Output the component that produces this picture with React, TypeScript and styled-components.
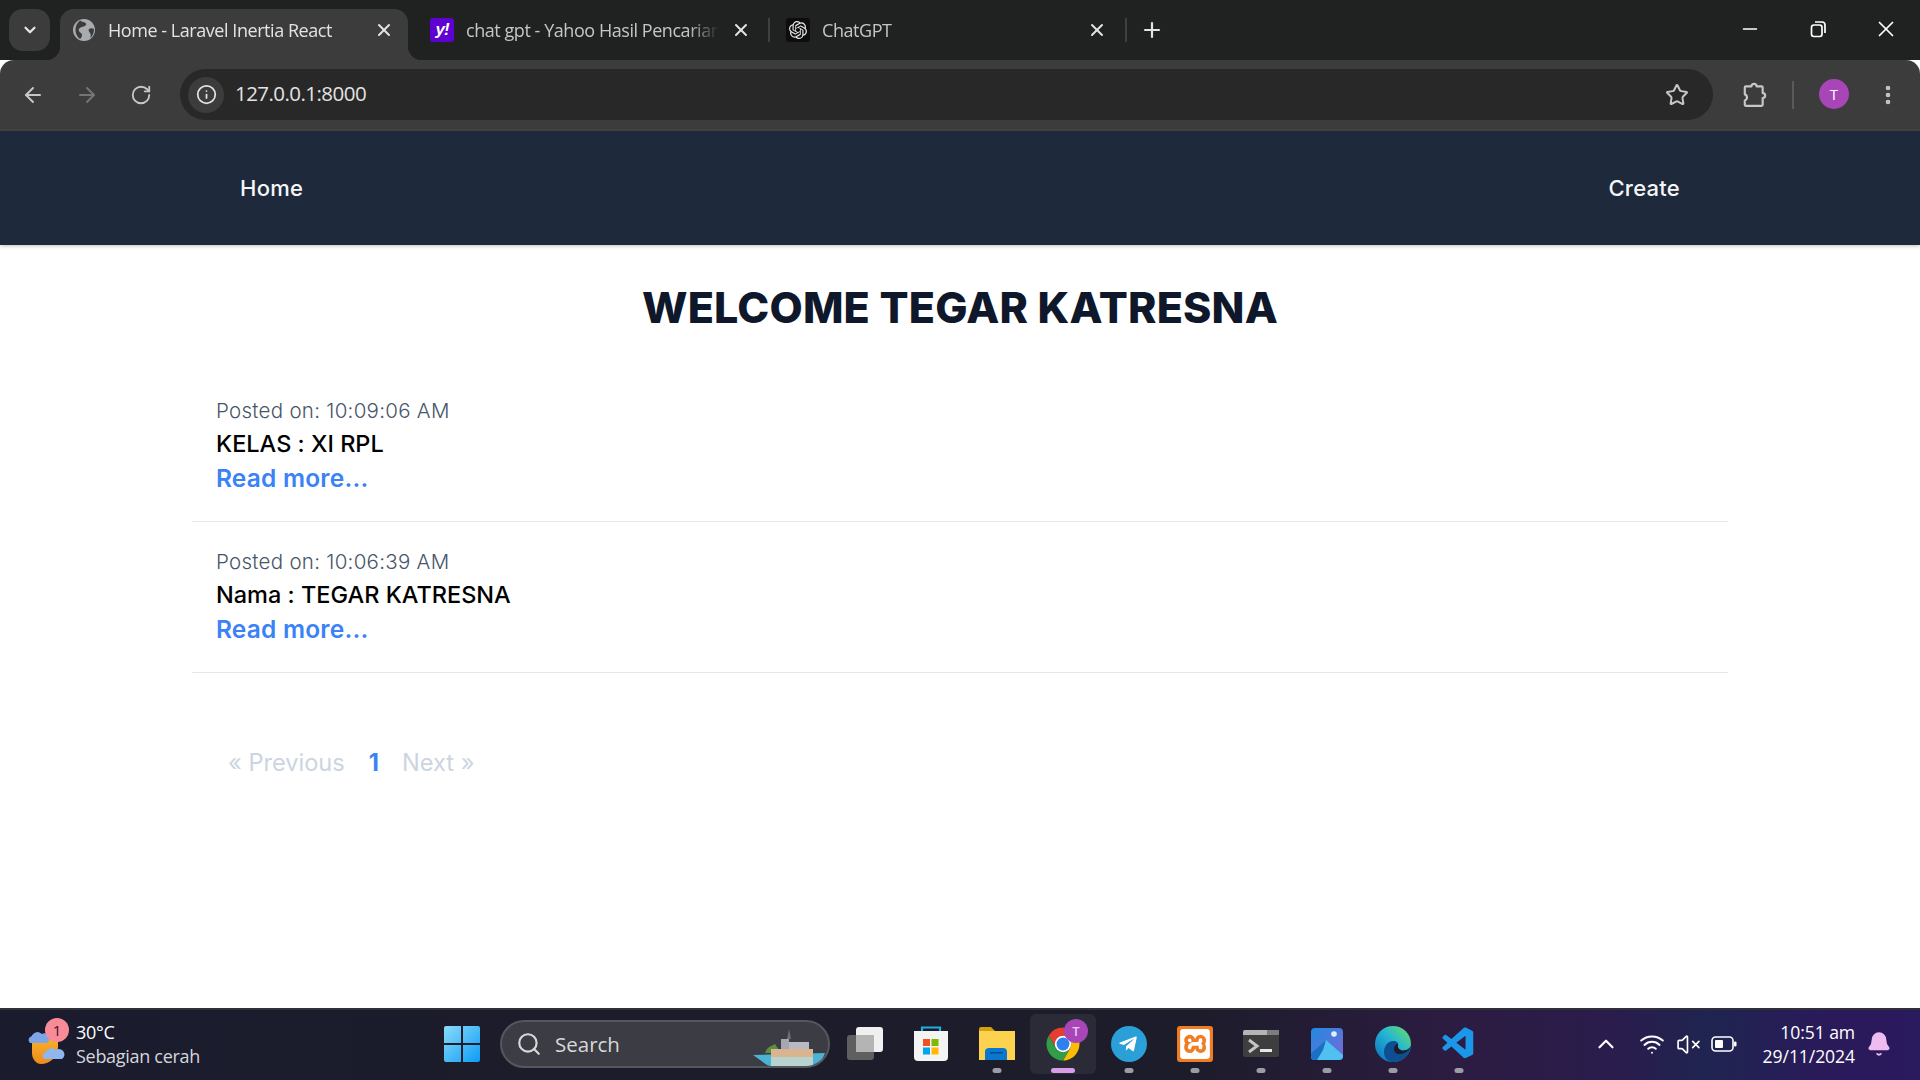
import type { ReactNode } from "react"
import styled, { createGlobalStyle } from "styled-components"
import { ArrowLeft, ArrowRight, RotateCw, Info, Star, EllipsisVertical, ChevronDown, ChevronUp, X, Plus, Minus, Search, Wifi, VolumeX, Bell } from "lucide-react"
import { SiOpenai, SiXampp } from "react-icons/si"
import { VscVscode } from "react-icons/vsc"
import { FaTelegramPlane } from "react-icons/fa"

const GlobalStyle = createGlobalStyle`
    html, body {
        margin: 0;
        padding: 0;
        height: 100%;
        background: white;
    }
    #root {
        height: 100%;
    }
    * {
        box-sizing: border-box;
    }
`

const Screen = styled.div`
    width: 1920px;
    height: 1080px;
    display: flex;
    flex-direction: column;
    overflow: hidden;
    font-family: Inter, sans-serif;
`

/* browser chrome */
const TabStrip = styled.div`
    height: 60px;
    flex: none;
    background: #202221;
    display: flex;
    align-items: flex-end;
    position: relative;
`

const TabSearchButton = styled.div`
    width: 41px;
    height: 42px;
    margin: 0 10px 9px 9px;
    border-radius: 14px;
    background: #3c3c3c;
    color: #e6e6e6;
    display: flex;
    align-items: center;
    justify-content: center;
`

const Tab = styled.div<{ $active?: boolean; $width: number; $left: number; $right: number }>`
    width: ${p => p.$width}px;
    height: 51px;
    flex: none;
    display: flex;
    align-items: center;
    padding: 0 ${p => p.$right}px 9px ${p => p.$left}px;
    gap: 12px;
    position: relative;
    border-radius: 14px 14px 0 0;
    background: ${p => (p.$active ? "#3c3c3c" : "transparent")};
    color: ${p => (p.$active ? "#e3e3e3" : "#c4c7c5")};
    font-family: "Open Sans", sans-serif;
    font-size: 18px;
    letter-spacing: -0.45px;

    ${p => p.$active && `
        &::before, &::after {
            content: "";
            position: absolute;
            bottom: 0;
            width: 14px;
            height: 14px;
        }
        &::before {
            left: -14px;
            background: radial-gradient(circle at 0 0, transparent 14px, #3c3c3c 14.5px);
        }
        &::after {
            right: -14px;
            background: radial-gradient(circle at 100% 0, transparent 14px, #3c3c3c 14.5px);
        }
    `}
`

const TabTitle = styled.span`
    flex: 1;
    white-space: nowrap;
    overflow: hidden;
    -webkit-mask-image: linear-gradient(to right, black 88%, transparent);
    mask-image: linear-gradient(to right, black 88%, transparent);
`

const TabIcon = styled.span<{ $bg?: string }>`
    width: 24px;
    height: 24px;
    flex: none;
    border-radius: 3px;
    display: flex;
    align-items: center;
    justify-content: center;
    background: ${p => p.$bg || "transparent"};
`

const YahooMark = styled.span`
    color: white;
    font-family: "Liberation Sans", sans-serif;
    font-weight: 700;
    font-size: 17px;
    letter-spacing: -1px;
    font-style: italic;
`

const TabClose = styled.span`
    flex: none;
    color: #e3e3e3;
    display: flex;
`

const TabDivider = styled.span`
    width: 2px;
    height: 24px;
    margin-bottom: 18px;
    flex: none;
    background: #3f4140;
`

const NewTab = styled.span`
    margin: 0 0 18px 13px;
    color: #e3e3e3;
    display: flex;
`

const WindowButtons = styled.div`
    margin-left: auto;
    margin-bottom: 18px;
    display: flex;
    align-items: center;
    color: white;
`

const WindowButton = styled.span`
    width: 68px;
    display: flex;
    justify-content: center;
`

const Toolbar = styled.div`
    height: 71px;
    flex: none;
    background: #3c3c3c;
    border-radius: 14px 14px 0 0;
    border-bottom: 2px solid #444;
    display: flex;
    align-items: flex-start;
    padding: 9px 0 0 6px;
`

const NavIcon = styled.span<{ $dim?: boolean; $width?: number }>`
    width: ${p => p.$width || 54}px;
    height: 51px;
    flex: none;
    display: flex;
    align-items: center;
    justify-content: center;
    color: ${p => (p.$dim ? "#757575" : "#c7c7c7")};
`

const AddressBar = styled.div`
    width: 1533px;
    height: 51px;
    margin: 0 14px 0 12px;
    flex: none;
    border-radius: 26px;
    background: #282828;
    display: flex;
    align-items: center;
    padding: 0 24px 0 8px;
    color: #e3e3e3;
    font-family: "Open Sans", sans-serif;
    font-size: 20.5px;
    letter-spacing: -0.55px;
    line-height: 49px;
`

const SiteInfo = styled.span`
    width: 36px;
    height: 36px;
    margin-right: 11px;
    border-radius: 50%;
    background: #3c3c3c;
    color: #e3e3e3;
    display: flex;
    align-items: center;
    justify-content: center;
`

const AddressText = styled.span`
    margin-top: -2px;
`

const BookmarkStar = styled.span`
    margin-left: auto;
    color: #c7c7c7;
    display: flex;
`

const ToolDivider = styled.span`
    width: 2px;
    height: 28px;
    margin: 12px 25px 0 11px;
    flex: none;
    background: #5a5a5a;
`

const ProfileDot = styled.span`
    width: 30px;
    height: 30px;
    margin: 10px 27px 0 0;
    flex: none;
    border-radius: 50%;
    background: #a846b8;
    color: white;
    font-family: "Open Sans", sans-serif;
    font-size: 15px;
    display: flex;
    align-items: center;
    justify-content: center;
`

/* page */
const TopNav = styled.nav`
    height: 114px;
    flex: none;
    background: #1e293b;
    box-shadow: 0 1px 4px rgba(0, 0, 0, 0.25);
    display: flex;
    align-items: center;
    justify-content: space-between;
    padding: 0 240px;
    color: #f5f6f8;
    font-size: 22px;
    font-weight: 500;
    letter-spacing: 0.25px;
`

const Main = styled.main`
    flex: 1;
    width: 1536px;
    margin: 0 auto;
`

const Title = styled.h1`
    margin: 37px 0 0;
    text-align: center;
    font-size: 43px;
    line-height: 50px;
    font-weight: 800;
    letter-spacing: 0.15px;
    color: #0f172a;
`

const PostList = styled.div`
    margin-top: 39px;
`

const Post = styled.article`
    height: 151px;
    padding: 23px 24px 0;
    border-bottom: 1px solid #e5e7eb;
`

const PostedOn = styled.div`
    height: 33px;
    line-height: 33px;
    font-size: 20.5px;
    font-weight: 300;
    letter-spacing: 0.28px;
    color: #475569;
`

const PostTitle = styled.div`
    height: 33px;
    line-height: 33px;
    font-size: 23.5px;
    font-weight: 500;
    font-feature-settings: "calt" 0;
    color: #000;
`

const ReadMore = styled.a`
    display: block;
    height: 36px;
    line-height: 36px;
    font-size: 24.5px;
    font-weight: 600;
    letter-spacing: 0.2px;
    color: #3b82f6;
`

const Pagination = styled.div`
    margin: 72px 0 0 36px;
    display: flex;
    align-items: center;
    font-size: 23.6px;
    line-height: 36px;
    color: #cbd5e1;
`

const PageCurrent = styled.span`
    margin: 0 23px 0 24px;
    color: #3b82f6;
    font-weight: 700;
`

/* taskbar */
const Taskbar = styled.footer`
    height: 72px;
    flex: none;
    border-top: 2px solid #2f3038;
    padding-bottom: 2px;
    background: linear-gradient(90deg, #1a1c2e 0%, #1c1c2a 30%, #1d1c2a 62%, #2c1c42 76%, #2a1c4c 84%, #1f2450 89%, #2a1a5a 95%, #2a1a5e 100%);
    display: flex;
    align-items: center;
    color: white;
    font-family: "Open Sans", sans-serif;
    position: relative;
`

const Weather = styled.div`
    width: 429px;
    flex: none;
    display: flex;
    align-items: center;
    padding-left: 28px;
    gap: 10px;
`

const WeatherIcon = styled.div`
    width: 38px;
    height: 42px;
    position: relative;
    flex: none;
`

const WeatherBadge = styled.span`
    position: absolute;
    top: -5px;
    left: 17px;
    width: 24px;
    height: 24px;
    border-radius: 50%;
    background: #f98b99;
    color: #30151c;
    font-size: 15px;
    display: flex;
    align-items: center;
    justify-content: center;
`

const WeatherText = styled.div`
    font-size: 18px;
    line-height: 24px;
    letter-spacing: -0.3px;
    color: #fff;
`

const WeatherSub = styled.div`
    color: #d6d6da;
`

const TaskSlot = styled.div<{ $active?: boolean }>`
    width: 66px;
    height: 60px;
    flex: none;
    border-radius: 6px;
    display: flex;
    align-items: center;
    justify-content: center;
    position: relative;
    background: ${p => (p.$active ? "#2a2b36" : "transparent")};
`

const RunDot = styled.span<{ $active?: boolean }>`
    position: absolute;
    bottom: 1px;
    left: 50%;
    transform: translateX(-50%);
    width: ${p => (p.$active ? 24 : 9)}px;
    height: 5px;
    border-radius: 3px;
    background: ${p => (p.$active ? "#d99ce8" : "#9c9ca4")};
`

const ChromeBadge = styled.span`
    position: absolute;
    top: 5px;
    right: 8px;
    width: 24px;
    height: 24px;
    border-radius: 50%;
    background: #a846b8;
    color: #e8c6ee;
    font-size: 13px;
    font-weight: 600;
    display: flex;
    align-items: center;
    justify-content: center;
`

const SearchPill = styled.div`
    width: 330px;
    height: 48px;
    margin: 0 2px 0 5px;
    flex: none;
    border-radius: 24px;
    background: #3b3c44;
    border: 2px solid #55565e;
    display: flex;
    align-items: center;
    padding-left: 14px;
    gap: 13px;
    font-size: 20.5px;
    color: #d8d8da;
    position: relative;
    overflow: hidden;
`

const SearchArt = styled.div`
    position: absolute;
    right: 3px;
    bottom: -1px;
    display: flex;
`

const Tray = styled.div`
    margin-left: auto;
    display: flex;
    align-items: center;
    height: 100%;
`

const TrayIcon = styled.span<{ $width: number; $gap?: number }>`
    width: ${p => p.$width}px;
    margin-right: ${p => p.$gap || 0}px;
    flex: none;
    display: flex;
    justify-content: center;
    color: white;
`

const Clock = styled.div`
    width: 105px;
    margin-left: 8px;
    text-align: right;
    font-size: 17.6px;
    line-height: 24px;
    letter-spacing: -0.1px;
    white-space: nowrap;
`

const BellSlot = styled.span`
    width: 47px;
    margin-right: 18px;
    flex: none;
    display: flex;
    justify-content: center;
    color: #eebcf0;
`

const Globe = () => (
    <svg width="24" height="24" viewBox="0 0 24 24">
        <circle cx="12" cy="12" r="11" fill="#a9acae" />
        <path d="M8 2.5c2 2 5 1 6 3s-2 3-4 3.5-4 2-3 4 3 2 3 4-1 3-2 4C3 18 1 8 8 2.5zM22 11c-2-1-4-1-5 0s0 3 1 4 1 3 0 5c3-2 4-6 4-9z" fill="#3c3c3c" />
    </svg>
)

const RestoreGlyph = () => (
    <svg width="18" height="18" viewBox="0 0 18 18" fill="none" stroke="white" strokeWidth="1.7">
        <rect x="2.5" y="5" width="10.5" height="11.5" rx="2.4" />
        <path d="M6 2h7a3 3 0 0 1 3 3v8" />
    </svg>
)

const ExtensionGlyph = () => (
    <svg width="26" height="26" viewBox="0 0 24 24" fill="none" stroke="#c7c7c7" strokeWidth="2">
        <path d="M4.5 4h5.2a2.3 2.3 0 0 1 4.6 0H19a1 1 0 0 1 1 1v5.2a2.3 2.3 0 0 1 0 4.6V21a1 1 0 0 1-1 1H4.5a1 1 0 0 1-1-1v-4a2.9 2.9 0 0 0 2-2.8 2.9 2.9 0 0 0-2-2.8V5a1 1 0 0 1 1-1z" strokeLinejoin="round" />
    </svg>
)

const BatteryGlyph = () => (
    <svg width="26" height="18" viewBox="0 0 26 18">
        <rect x="1" y="2" width="21" height="14" rx="3.5" fill="none" stroke="white" strokeWidth="1.6" />
        <rect x="4" y="5" width="8" height="8" rx="1" fill="white" />
        <rect x="23" y="6.5" width="2.5" height="5" rx="1" fill="white" />
    </svg>
)

const ChromeLogo = () => (
    <svg width="36" height="36" viewBox="0 0 48 48">
        <path d="M24 2A22 22 0 0 1 43.05 13H24A11 11 0 0 0 14.5 29.5L4.95 13A22 22 0 0 1 24 2Z" fill="#e53d30" />
        <path d="M43.05 13A22 22 0 0 1 24 46L33.5 29.5A11 11 0 0 0 24 13Z" fill="#fbbc04" />
        <path d="M4.95 13L14.5 29.5A11 11 0 0 0 33.5 29.5L24 46A22 22 0 0 1 4.95 13Z" fill="#2f9e46" />
        <circle cx="24" cy="24" r="11" fill="white" />
        <circle cx="24" cy="24" r="8.6" fill="#2f7fec" />
    </svg>
)

const WindowsLogo = () => (
    <svg width="36" height="36" viewBox="0 0 36 36">
        <defs>
            <linearGradient id="win" x1="0" y1="0" x2="1" y2="1">
                <stop offset="0" stopColor="#8adcfb" />
                <stop offset="1" stopColor="#0d9bf4" />
            </linearGradient>
        </defs>
        <path d="M2 0h15v17H0V2a2 2 0 0 1 2-2zM19 0h15a2 2 0 0 1 2 2v15H19zM0 19h17v17H2a2 2 0 0 1-2-2zM19 19h17v15a2 2 0 0 1-2 2H19z" fill="url(#win)" />
    </svg>
)

const TaskView = () => (
    <svg width="38" height="36" viewBox="0 0 38 36">
        <rect x="1" y="9" width="27" height="25" rx="3" fill="#5f5f5f" />
        <rect x="10" y="1" width="27" height="25" rx="3" fill="#f0f0f0" />
        <rect x="10" y="9" width="18" height="17" fill="#b4b4b4" />
    </svg>
)

const StoreLogo = () => (
    <svg width="36" height="36" viewBox="0 0 36 36">
        <path d="M9 6V1.5h18V6" fill="none" stroke="#1aaee8" strokeWidth="2.2" />
        <path d="M1 5h34v26a4 4 0 0 1-4 4H5a4 4 0 0 1-4-4z" fill="#f4f4f4" />
        <rect x="10" y="13" width="7" height="7" fill="#f25022" />
        <rect x="18.5" y="13" width="7" height="7" fill="#7fba00" />
        <rect x="10" y="21.5" width="7" height="7" fill="#00a4ef" />
        <rect x="18.5" y="21.5" width="7" height="7" fill="#ffb900" />
    </svg>
)

const FolderLogo = () => (
    <svg width="36" height="34" viewBox="0 0 36 34">
        <path d="M0 2a2 2 0 0 1 2-2h10l4 4h18a2 2 0 0 1 2 2v6H0z" fill="#d79f0d" />
        <rect y="4" width="36" height="29" fill="#fdd24f" />
        <path d="M6 33v-8a4 4 0 0 1 4-4h14a4 4 0 0 1 4 4v8z" fill="#0a78cf" />
        <rect x="11" y="25" width="13" height="1.6" fill="#054f95" />
    </svg>
)

const TelegramLogo = () => (
    <svg width="36" height="36" viewBox="0 0 36 36">
        <circle cx="18" cy="18" r="18" fill="#2a9fd8" />
        <foreignObject x="7" y="8" width="22" height="22">
            <FaTelegramPlane size={20} color="white" />
        </foreignObject>
    </svg>
)

const XamppLogo = () => (
    <svg width="36" height="36" viewBox="0 0 36 36">
        <rect width="36" height="36" rx="3" fill="#f07d23" />
        <foreignObject x="3" y="3" width="30" height="30">
            <SiXampp size={30} color="white" />
        </foreignObject>
    </svg>
)

const TerminalLogo = () => (
    <svg width="36" height="28" viewBox="0 0 36 28">
        <rect width="36" height="27" rx="2" fill="#3e3e3e" />
        <path d="M2 0h22v5H0V2a2 2 0 0 1 2-2z" fill="#b5b5b5" />
        <rect x="24" width="12" height="5" fill="#7d7d7d" />
        <path d="M6 10l8 6-8 6" fill="none" stroke="#c4c4c4" strokeWidth="3" />
        <rect x="17" y="19" width="12" height="3" fill="#e6e6e6" />
    </svg>
)

const PhotosLogo = () => (
    <svg width="32" height="32" viewBox="0 0 32 32">
        <defs>
            <linearGradient id="photos" x1="0" y1="0" x2="1" y2="1">
                <stop offset="0" stopColor="#1f8adf" />
                <stop offset="1" stopColor="#7a68d8" />
            </linearGradient>
        </defs>
        <rect width="32" height="32" rx="4" fill="url(#photos)" />
        <circle cx="23" cy="6" r="2.8" fill="#e4eefb" />
        <path d="M0 25l15-13 17 15v1a4 4 0 0 1-4 4H4a4 4 0 0 1-4-4z" fill="#4fc0ef" />
        <path d="M0 25l15-13-3 10-6 10H4a4 4 0 0 1-4-4z" fill="#1b6fc4" />
    </svg>
)

const EdgeLogo = () => (
    <svg width="36" height="36" viewBox="0 0 36 36">
        <defs>
            <linearGradient id="edgeA" x1="0" y1="1" x2="1" y2="0">
                <stop offset="0" stopColor="#0a6dc2" />
                <stop offset="0.55" stopColor="#25b7d3" />
                <stop offset="1" stopColor="#6fe05c" />
            </linearGradient>
        </defs>
        <circle cx="18" cy="18" r="18" fill="url(#edgeA)" />
        <path d="M36 20c-1 9-8 16-18 16-5 0-9-4-9-10 0-6 4-11 9-11 4 0 6 2 5 5-1 3-1 5 3 5 4 0 7-1 10-5z" fill="#0d4f92" />
        <path d="M23 21c1 3 4 4 8 3 2 0 4-2 5-4-1 4-6 8-11 8-4 0-6-2-6-5 0-3 2-5 4-5z" fill="#1c1c2a" />
    </svg>
)

const WeatherArt = () => (
    <svg width="38" height="42" viewBox="0 0 38 42">
        <defs>
            <linearGradient id="sun" x1="0" y1="0" x2="0" y2="1">
                <stop offset="0" stopColor="#f8b62c" />
                <stop offset="1" stopColor="#ee8a1c" />
            </linearGradient>
        </defs>
        <path d="M4 12h26v12a17 17 0 0 1-17 17C8 41 4 36 4 30z" fill="url(#sun)" />
        <path d="M2 20a4 4 0 0 1 2-7 6 6 0 0 1 10-2 5 5 0 0 1 5 9z" fill="#7ca6e8" />
        <path d="M16 36a4 4 0 0 1 2-7 6 6 0 0 1 10-2 5 5 0 0 1 6 9z" fill="#8fb6ee" />
    </svg>
)

const IslandArt = () => (
    <svg width="72" height="38" viewBox="0 0 72 38">
        <path d="M0 26l14 10 6 2h46l6-14z" fill="#4bb3d3" />
        <path d="M12 24c2-6 6-7 10-9l6 9z" fill="#5c8f3c" />
        <rect x="18" y="20" width="42" height="8" fill="#d9b491" />
        <rect x="28" y="10" width="8" height="10" fill="#a7a7b4" />
        <rect x="36" y="13" width="20" height="7" fill="#b9b9c4" />
        <path d="M36 0l2 10h-4z" fill="#6d6f7d" />
        <rect x="18" y="28" width="42" height="10" fill="#b9d4cf" />
    </svg>
)

type TaskItem = {
    name: string
    icon: ReactNode
    running?: boolean
    active?: boolean
}

const taskItems: TaskItem[] = [
    { name: "taskview", icon: <TaskView /> },
    { name: "store", icon: <StoreLogo /> },
    { name: "explorer", icon: <FolderLogo />, running: true },
    { name: "chrome", icon: <ChromeLogo />, running: true, active: true },
    { name: "telegram", icon: <TelegramLogo />, running: true },
    { name: "xampp", icon: <XamppLogo />, running: true },
    { name: "terminal", icon: <TerminalLogo />, running: true },
    { name: "photos", icon: <PhotosLogo />, running: true },
    { name: "edge", icon: <EdgeLogo />, running: true },
    { name: "vscode", icon: <VscVscode size={38} color="#1a97e8" />, running: true },
]

const posts = [
    { time: "10:09:06 AM", title: "KELAS : XI RPL" },
    { time: "10:06:39 AM", title: "Nama : TEGAR KATRESNA" },
]

const App = () => {
    return <Screen>
        <GlobalStyle />
        <TabStrip>
            <TabSearchButton><ChevronDown size={18} strokeWidth={3} /></TabSearchButton>
            <Tab $active $width={348} $left={12} $right={14}>
                <TabIcon><Globe /></TabIcon>
                <TabTitle>Home - Laravel Inertia React</TabTitle>
                <TabClose><X size={20} strokeWidth={2.4} /></TabClose>
            </Tab>
            <Tab $width={360} $left={22} $right={17}>
                <TabIcon $bg="#5f01d1"><YahooMark>y!</YahooMark></TabIcon>
                <TabTitle>chat gpt - Yahoo Hasil Pencarian</TabTitle>
                <TabClose><X size={20} strokeWidth={2.4} /></TabClose>
            </Tab>
            <TabDivider />
            <Tab $width={355} $left={16} $right={18}>
                <TabIcon $bg="#0d0d0d"><SiOpenai size={18} color="#e8e8e8" /></TabIcon>
                <TabTitle>ChatGPT</TabTitle>
                <TabClose><X size={20} strokeWidth={2.4} /></TabClose>
            </Tab>
            <TabDivider />
            <NewTab><Plus size={24} strokeWidth={2.2} /></NewTab>
            <WindowButtons>
                <WindowButton><Minus size={22} strokeWidth={1.8} /></WindowButton>
                <WindowButton><RestoreGlyph /></WindowButton>
                <WindowButton><X size={26} strokeWidth={1.6} /></WindowButton>
            </WindowButtons>
        </TabStrip>

        <Toolbar>
            <NavIcon><ArrowLeft size={24} /></NavIcon>
            <NavIcon $dim><ArrowRight size={24} /></NavIcon>
            <NavIcon><RotateCw size={22} /></NavIcon>
            <AddressBar>
                <SiteInfo><Info size={21} /></SiteInfo>
                <AddressText>127.0.0.1:8000</AddressText>
                <BookmarkStar><Star size={24} strokeWidth={2} /></BookmarkStar>
            </AddressBar>
            <NavIcon><ExtensionGlyph /></NavIcon>
            <ToolDivider />
            <ProfileDot>T</ProfileDot>
            <NavIcon $width={24}><EllipsisVertical size={24} strokeWidth={2.6} /></NavIcon>
        </Toolbar>

        <TopNav>
            <span>Home</span>
            <span>Create</span>
        </TopNav>

        <Main>
            <Title>WELCOME TEGAR KATRESNA</Title>
            <PostList>
                {posts.map(post => (
                    <Post key={post.time}>
                        <PostedOn>Posted on: {post.time}</PostedOn>
                        <PostTitle>{post.title}</PostTitle>
                        <ReadMore>Read more...</ReadMore>
                    </Post>
                ))}
            </PostList>
            <Pagination>
                <span>« Previous</span>
                <PageCurrent>1</PageCurrent>
                <span>Next »</span>
            </Pagination>
        </Main>

        <Taskbar>
            <Weather>
                <WeatherIcon>
                    <WeatherArt />
                    <WeatherBadge>1</WeatherBadge>
                </WeatherIcon>
                <WeatherText>
                    30°C
                    <WeatherSub>Sebagian cerah</WeatherSub>
                </WeatherText>
            </Weather>
            <TaskSlot><WindowsLogo /></TaskSlot>
            <SearchPill>
                <Search size={26} strokeWidth={2} />
                Search
                <SearchArt><IslandArt /></SearchArt>
            </SearchPill>
            {taskItems.map(item => (
                <TaskSlot key={item.name} $active={item.active}>
                    {item.icon}
                    {item.active && <ChromeBadge>T</ChromeBadge>}
                    {item.running && <RunDot $active={item.active} />}
                </TaskSlot>
            ))}
            <Tray>
                <TrayIcon $width={36} $gap={10}><ChevronUp size={26} strokeWidth={2} /></TrayIcon>
                <TrayIcon $width={36}><Wifi size={26} strokeWidth={1.8} /></TrayIcon>
                <TrayIcon $width={36}><VolumeX size={25} strokeWidth={1.6} /></TrayIcon>
                <TrayIcon $width={36}><BatteryGlyph /></TrayIcon>
                <Clock>
                    10:51 am
                    <br />
                    29/11/2024
                </Clock>
                <BellSlot><Bell size={26} fill="#eebcf0" strokeWidth={1.5} /></BellSlot>
            </Tray>
        </Taskbar>
    </Screen>
}

export default App
